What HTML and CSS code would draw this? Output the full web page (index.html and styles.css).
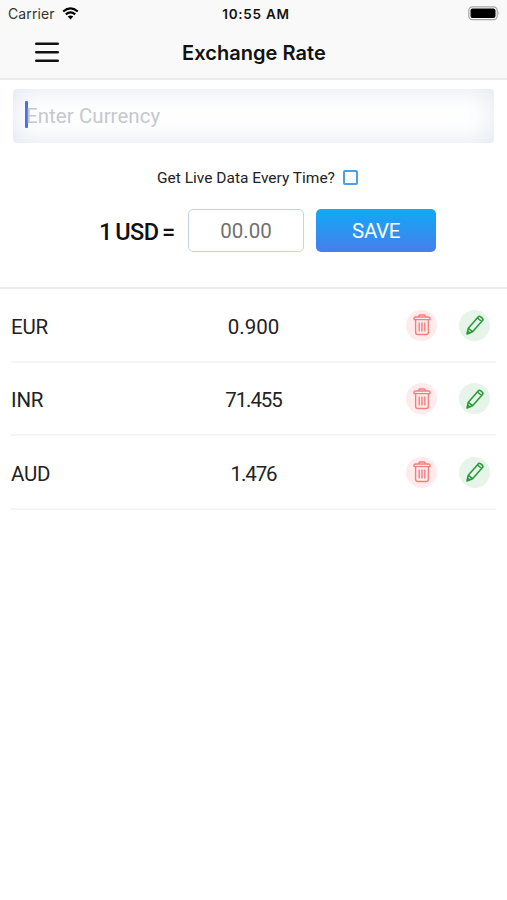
FILE: index.html
```html
<!DOCTYPE html>
<html lang="en">
<head>
<meta charset="UTF-8">
<meta name="viewport" content="width=device-width, initial-scale=1.0">
<title>Exchange Rate</title>
<link rel="stylesheet" href="styles.css">
</head>
<body>
<svg class="symbols" width="0" height="0">
    <symbol id="trash" viewBox="0 0 18 22">
        <path d="M1 5.6V4.4q0-1.4 1.6-1.4h12.8q1.6 0 1.6 1.4v1.2zM5.8 3V1.9q0-.9.9-.9h4.6q.9 0 .9.9V3M2.6 5.6v12.6q0 2.3 2.3 2.3h8.2q2.3 0 2.3-2.3V5.6M6.2 8.5v9M9 8.5v9M11.8 8.5v9"/>
    </symbol>
    <symbol id="pencil" viewBox="0 0 18 20">
        <path d="M1 19l1.3-5.7L12.2 1.9q1-1.1 2.3-.2l1.7 1.4q1.3 1.1.3 2.4L6.6 16.7 1 19zM2.3 13.3l4.3 3.4M11.5 3l4.2 3.5M1 19l.7-2.9 2 1.8z"/>
    </symbol>
</svg>

<header class="header">
    <div class="status">
        <div class="carrier">
            <span>Carrier</span>
            <svg class="wifi" viewBox="0 0 17 13" width="17" height="13">
                <path d="M1.2 4.5Q8.5-1.7 15.8 4.5M3.8 7.4q4.7-3.9 9.4 0" fill="none" stroke="#000" stroke-width="2.2"/>
                <path d="M5.7 9.5q2.8-2.2 5.6 0L8.5 12.4z"/>
            </svg>
        </div>
        <div class="time">10:55 AM</div>
        <svg class="battery" viewBox="0 0 33 15" width="33" height="15">
            <rect x=".8" y=".8" width="28.4" height="12.9" rx="3.6" fill="#fff" stroke="#a5a5a5" stroke-width="1.2"/>
            <rect x="2.5" y="2.5" width="25" height="9.5" rx="2"/>
            <path d="M30.6 5q1.5 2.2 0 4.4z" fill="#999"/>
        </svg>
    </div>
    <div class="navbar">
        <svg class="menu" viewBox="0 0 24 21" width="24" height="21">
            <path d="M1.3 1.7h21.4M1.3 10.2h21.4M1.3 18.7h21.4"/>
        </svg>
        <h1 class="title">Exchange Rate</h1>
    </div>
</header>

<section class="form">
    <div class="search">
        <span class="caret"></span>
        <span class="placeholder">Enter Currency</span>
    </div>
    <div class="live">
        <span class="live-text">Get Live Data Every Time?</span>
        <span class="checkbox"></span>
    </div>
    <div class="rate">
        <span class="usd">1 USD =</span>
        <div class="amount"><span>00.00</span></div>
        <div class="save"><span>SAVE</span></div>
    </div>
</section>

<ul class="list">
    <li class="row">
        <span class="code">EUR</span>
        <span class="value">0.900</span>
        <div class="actions">
            <span class="circle red"><svg width="18" height="22"><use href="#trash"/></svg></span>
            <span class="circle green"><svg width="18" height="20"><use href="#pencil"/></svg></span>
        </div>
    </li>
    <li class="row">
        <span class="code">INR</span>
        <span class="value narrow">71.455</span>
        <div class="actions">
            <span class="circle red"><svg width="18" height="22"><use href="#trash"/></svg></span>
            <span class="circle green"><svg width="18" height="20"><use href="#pencil"/></svg></span>
        </div>
    </li>
    <li class="row">
        <span class="code">AUD</span>
        <span class="value narrow">1.476</span>
        <div class="actions">
            <span class="circle red"><svg width="18" height="22"><use href="#trash"/></svg></span>
            <span class="circle green"><svg width="18" height="20"><use href="#pencil"/></svg></span>
        </div>
    </li>
</ul>
</body>
</html>
```
FILE: styles.css
```css
* {
    box-sizing: border-box;
}
body {
    margin: 0;
    background-color: #fff;
    color: #222;
    font-family: Roboto, "Liberation Sans", sans-serif;
    overflow: hidden;
}
.symbols {
    position: absolute;
}

/* Header */
.header {
    height: 80px;
    background-color: #f9f9f9;
    border-bottom: 2px solid #ebebec;
    font-family: Inter, "Liberation Sans", sans-serif;
}
.status {
    display: grid;
    grid-template-columns: 1fr auto 1fr;
    align-items: center;
    height: 27px;
    padding: 0 6px 0 8px;
}
.carrier {
    display: flex;
    align-items: center;
    gap: 7px;
    font-size: 14px;
    letter-spacing: 0.1px;
    color: #333;
}
.time {
    padding-left: 3px;
    font-size: 13.5px;
    font-weight: 600;
    letter-spacing: 0.75px;
    color: #111;
}
.battery {
    justify-self: end;
}
.navbar {
    display: grid;
    grid-template-columns: 1fr auto 1fr;
    align-items: center;
    height: 51px;
}
.menu {
    margin-left: 35px;
    fill: none;
    stroke: #111;
    stroke-width: 2.6;
    stroke-linecap: round;
}
.title {
    margin: 0;
    padding-left: 1px;
    font-size: 20px;
    font-weight: 600;
    letter-spacing: 0.05px;
    color: #111;
}

/* Form */
.form {
    height: 209px;
    padding: 9px 13px 0;
    border-bottom: 2px solid #ebedf0;
}
.search {
    display: flex;
    align-items: center;
    height: 54px;
    padding-left: 12px;
    border-radius: 4px;
    background-color: #fff;
    box-shadow: inset 0 0 28px #e0e6f0;
}
.caret {
    width: 3px;
    height: 27px;
    margin-top: -3px;
    border-radius: 1px;
    background-color: #4a70e2;
}
.placeholder {
    margin-left: -2px;
    font-size: 20.5px;
    letter-spacing: 0.05px;
    color: #c6c8cd;
}
.live {
    display: flex;
    align-items: center;
    justify-content: center;
    gap: 8px;
    height: 15px;
    margin: 27px 0 24px;
    padding-left: 8px;
}
.live-text {
    font-size: 15.5px;
    white-space: nowrap;
}
.checkbox {
    width: 15px;
    height: 15px;
    border: 2px solid #4c9fe2;
    border-radius: 2px;
}
.rate {
    display: grid;
    grid-template-columns: 77px 116px 120px;
    column-gap: 12px;
    align-items: center;
    height: 43px;
    padding-left: 86px;
}
.usd {
    padding-top: 2px;
    font-size: 23.5px;
    font-weight: 500;
    letter-spacing: -0.5px;
    word-spacing: -2px;
    white-space: nowrap;
    color: #111;
}
.amount,
.save {
    display: flex;
    align-items: center;
    justify-content: center;
    height: 43px;
    padding-top: 1px;
    border-radius: 5px;
    font-size: 20.5px;
}
.amount {
    border: 1.5px solid #c3d3ea;
    color: #707070;
}
.save {
    background: linear-gradient(#10aaf6, #477eeb);
    color: #fff;
    letter-spacing: -0.4px;
}

/* Currency list */
.list {
    margin: 0;
    padding: 0 11px;
    list-style: none;
}
.row {
    display: grid;
    grid-template-columns: 1fr 110px 1fr;
    align-items: center;
    height: 73.5px;
    border-bottom: 2px solid #f5f5f6;
    font-size: 20.5px;
}
.code {
    padding-top: 4px;
    letter-spacing: -0.2px;
}
.value {
    padding-top: 4px;
    text-align: center;
}
.narrow {
    letter-spacing: -1.1px;
}
.actions {
    display: flex;
    justify-content: flex-end;
    gap: 22px;
    padding: 1px 6px 0 0;
}
.circle {
    display: flex;
    align-items: center;
    justify-content: center;
    width: 31px;
    height: 31px;
    border-radius: 50%;
    fill: none;
    stroke-linejoin: round;
}
.red {
    background-color: #ffebeb;
    stroke: #f08080;
    stroke-width: 1.4;
}
.green {
    background-color: #e7f4e9;
    stroke: #2b9b3b;
    stroke-width: 1.6;
}
```
